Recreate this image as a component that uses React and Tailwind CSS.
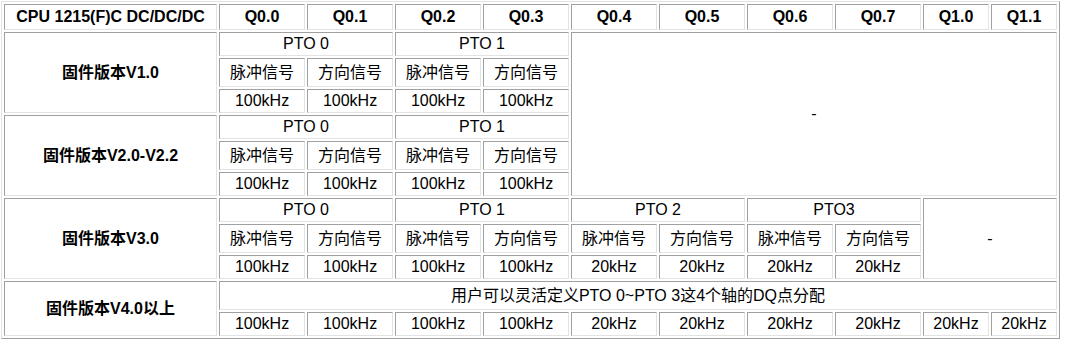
import React from 'react'

const cell = 'border border-t-[#a0a0a0] border-l-[#a0a0a0] border-b-[#e3e3e3] border-r-[#e3e3e3] text-center p-0'
const head = cell + ' font-bold'

const signals = ['脉冲信号', '方向信号']

const Signals = ({ pairs }) =>
	Array.from({ length: pairs }).flatMap((_, i) =>
		signals.map((s) => (
			<td key={i + s} className={cell}>{s}</td>
		))
	)

const Freqs = ({ list }) => list.map((f, i) => (
	<td key={i} className={cell}>{f}</td>
))

export default function App() {
	const cols = ['Q0.0', 'Q0.1', 'Q0.2', 'Q0.3', 'Q0.4', 'Q0.5', 'Q0.6', 'Q0.7']
	const k100 = ['100kHz', '100kHz', '100kHz', '100kHz']

	return (
		<div className="bg-white min-h-screen pt-px pl-px font-['Liberation_Sans','Noto_Sans_CJK_SC',sans-serif] text-[16px] leading-[20px] text-black">
			<table className="table-fixed w-[1059px] border-separate border-spacing-[2px] border border-t-[#e3e3e3] border-l-[#e3e3e3] border-b-[#a0a0a0] border-r-[#a0a0a0]">
				<tbody>
					{/* header */}
					<tr className="h-[26px]">
						<td className={head + ' w-[213px]'}>CPU 1215(F)C DC/DC/DC</td>
						{cols.map((c) => (
							<td key={c} className={head + ' w-[86px]'}>{c}</td>
						))}
						<td className={head + ' w-[66px]'}>Q1.0</td>
						<td className={head + ' w-[66px]'}>Q1.1</td>
					</tr>

					{/* V1.0 */}
					<tr className="h-[24px]">
						<td rowSpan={3} className={head}>固件版本V1.0</td>
						<td colSpan={2} className={cell}>PTO 0</td>
						<td colSpan={2} className={cell}>PTO 1</td>
						<td colSpan={6} rowSpan={6} className={cell}>-</td>
					</tr>
					<tr className="h-[29px]"><Signals pairs={2} /></tr>
					<tr className="h-[24px]"><Freqs list={k100} /></tr>

					{/* V2.0-V2.2 */}
					<tr className="h-[24px]">
						<td rowSpan={3} className={head}>固件版本V2.0-V2.2</td>
						<td colSpan={2} className={cell}>PTO 0</td>
						<td colSpan={2} className={cell}>PTO 1</td>
					</tr>
					<tr className="h-[29px]"><Signals pairs={2} /></tr>
					<tr className="h-[24px]"><Freqs list={k100} /></tr>

					{/* V3.0 */}
					<tr className="h-[24px]">
						<td rowSpan={3} className={head}>固件版本V3.0</td>
						<td colSpan={2} className={cell}>PTO 0</td>
						<td colSpan={2} className={cell}>PTO 1</td>
						<td colSpan={2} className={cell}>PTO 2</td>
						<td colSpan={2} className={cell}>PTO3</td>
						<td colSpan={2} rowSpan={3} className={cell}>-</td>
					</tr>
					<tr className="h-[29px]"><Signals pairs={4} /></tr>
					<tr className="h-[24px]"><Freqs list={[...k100, '20kHz', '20kHz', '20kHz', '20kHz']} /></tr>

					{/* V4.0+ */}
					<tr className="h-[29px]">
						<td rowSpan={2} className={head}>固件版本V4.0以上</td>
						<td colSpan={10} className={cell}>用户可以灵活定义PTO 0~PTO 3这4个轴的DQ点分配</td>
					</tr>
					<tr className="h-[24px]">
						<Freqs list={[...k100, '20kHz', '20kHz', '20kHz', '20kHz', '20kHz', '20kHz']} />
					</tr>
				</tbody>
			</table>
		</div>
	)
}
